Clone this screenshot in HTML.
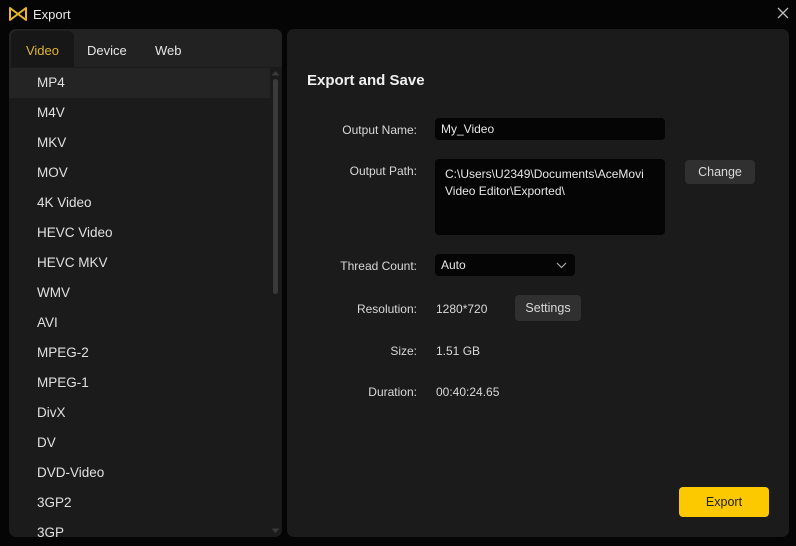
<!DOCTYPE html>
<html><head><meta charset="utf-8"><style>
*{margin:0;padding:0;box-sizing:border-box}
body{width:796px;height:546px;background:#050505;font-family:"Liberation Sans",sans-serif;color:#e6e6e6;position:relative;overflow:hidden;font-size:13px}
.title{position:absolute;left:33px;top:7px;font-size:13px;color:#e8e8e8}
.close{position:absolute;left:776px;top:6px;width:14px;height:14px}
.lp{position:absolute;left:9px;top:29px;width:273px;height:508px;background:#1b1b1b;border-radius:7px;overflow:hidden}
.tabs{height:38px;background:#222;position:relative}
.tab{position:absolute;top:0;height:38px;line-height:43px;font-size:13px;color:#e6e6e6}
.tab.v{left:2px;width:63px;background:#171717;border-radius:6px 6px 0 0;color:#e2b52a;text-align:center;top:2px;height:36px;line-height:40px}
.list{padding-top:1px}
.row{height:30px;line-height:30px;padding-left:28px;font-size:13.5px;color:#e0e0e0}
.row.sel{background:#242424;margin-right:12px}
.sb{position:absolute;left:264px;top:50px;width:5px;height:215px;background:#3a3a3a;border-radius:3px}
.rp{position:absolute;left:287px;top:29px;width:502px;height:508px;background:#1b1b1b;border-radius:7px}
.h{position:absolute;left:20px;top:43px;font-size:15px;font-weight:bold;color:#efefef}
.lab{position:absolute;right:372px;font-size:12px;color:#d8d8d8;text-align:right;white-space:nowrap}
.val{position:absolute;left:149px;font-size:12px;color:#d8d8d8}
.inp{position:absolute;left:148px;background:#050505;border-radius:4px;font-size:12px;color:#e6e6e6;padding-left:6px}
.btn{position:absolute;background:#303030;border-radius:4px;font-size:12.5px;color:#d8d8d8;text-align:center}
</style></head><body>
<svg style="position:absolute;left:8px;top:6px" width="20" height="16" viewBox="0 0 20 16"><path d="M2 2 L2 14 L10 8 Z M18 2 L18 14 L10 8 Z" fill="none" stroke="#e8b42c" stroke-width="2" stroke-linejoin="round"/></svg>
<div class="title">Export</div>
<svg class="close" viewBox="0 0 14 14"><path d="M2 2L12 12M12 2L2 12" stroke="#bbb" stroke-width="1.3"/></svg>
<div class="lp">
<div class="tabs"><div class="tab v">Video</div><div class="tab" style="left:78px">Device</div><div class="tab" style="left:146px">Web</div></div>
<div class="list">
<div class="row sel">MP4</div><div class="row">M4V</div><div class="row">MKV</div><div class="row">MOV</div><div class="row">4K Video</div><div class="row">HEVC Video</div><div class="row">HEVC MKV</div><div class="row">WMV</div><div class="row">AVI</div><div class="row">MPEG-2</div><div class="row">MPEG-1</div><div class="row">DivX</div><div class="row">DV</div><div class="row">DVD-Video</div><div class="row">3GP2</div><div class="row">3GP</div>
</div>
<svg style="position:absolute;left:262px;top:41px" width="9" height="6"><path d="M0.5 5.5L4.5 1L8.5 5.5Z" fill="#3a3a3a"/></svg>
<div class="sb"></div>
<svg style="position:absolute;left:262px;top:499px" width="9" height="6"><path d="M0.5 0.5L4.5 5L8.5 0.5Z" fill="#3a3a3a"/></svg>
</div>
<div class="rp">
<div class="h">Export and Save</div>
<div class="lab" style="top:94px">Output Name:</div>
<div class="inp" style="top:89px;width:230px;height:22px;line-height:22px">My_Video</div>
<div class="lab" style="top:135px">Output Path:</div>
<div class="inp" style="top:130px;width:230px;height:76px;padding:7px 10px;line-height:17px">C:\Users\U2349\Documents\AceMovi Video Editor\Exported\</div>
<div class="btn" style="left:398px;top:131px;width:70px;height:24px;line-height:24px">Change</div>
<div class="lab" style="top:230px">Thread Count:</div>
<div class="inp" style="top:225px;width:140px;height:22px;line-height:22px">Auto<svg style="position:absolute;right:8px;top:8px" width="11" height="7"><path d="M1 1L5.5 5.5L10 1" fill="none" stroke="#aaa" stroke-width="1.2"/></svg></div>
<div class="lab" style="top:273px">Resolution:</div>
<div class="val" style="top:273px">1280*720</div>
<div class="btn" style="left:228px;top:266px;width:66px;height:26px;line-height:26px">Settings</div>
<div class="lab" style="top:315px">Size:</div>
<div class="val" style="top:315px">1.51 GB</div>
<div class="lab" style="top:356px">Duration:</div>
<div class="val" style="top:356px">00:40:24.65</div>
<div class="btn" style="left:392px;top:458px;width:90px;height:30px;line-height:30px;background:#fcc900;color:#222">Export</div>
</div>
</body></html>
